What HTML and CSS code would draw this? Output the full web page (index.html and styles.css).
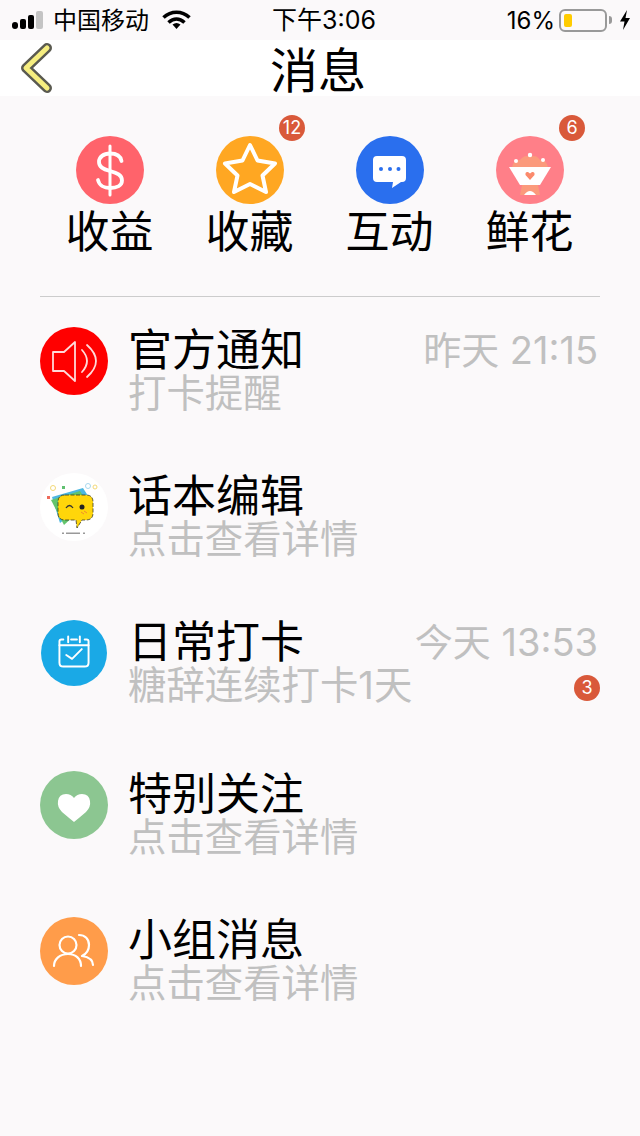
FILE: index.html
```html
<!DOCTYPE html>
<html lang="zh-CN">
<head>
  <meta charset="UTF-8" />
  <title>消息</title>
  <meta name="viewport" content="width=device-width, initial-scale=1.0" />
  <link rel="stylesheet" href="styles.css">
</head>
<body>
  <div class="status-bar">
    <div class="status-left">
      <svg class="signal" width="36" height="20" viewBox="0 0 36 20">
        <rect x="0" y="12" width="6" height="7" rx="3" fill="#000" />
        <rect x="8" y="9" width="6" height="10" rx="2" fill="#000" />
        <rect x="16" y="5" width="6" height="14" rx="2" fill="#000" />
        <rect x="24" y="1" width="7" height="18" rx="2" fill="#c4c4c4" />
      </svg>
      <span class="carrier">中国移动</span>
      <svg class="wifi" width="30" height="20" viewBox="0 0 30 20">
        <path d="M1.500 7.500C9 0.500 20 0.500 27.500 7.500" />
        <path d="M6.500 12.500C11.500 8 17.500 8 22.500 12.500" />
        <path class="wifi-dot" d="M10.500 14.600Q14.500 11.500 18.500 14.600L14.500 19Z" />
      </svg>
    </div>
    <div class="status-time">下午3:06</div>
    <div class="status-right">
      <span>16%</span>
      <span class="battery"><span class="battery-level"></span></span>
      <span class="battery-cap"></span>
      <svg width="12" height="20" viewBox="0 0 12 20"><path d="M8 0L1 11.500H5.500L4 20L11 8H6.500Z" fill="#000" /></svg>
    </div>
  </div>

  <header class="nav">
    <svg class="back" width="40" height="52" viewBox="0 0 40 52">
      <polyline class="back-edge" points="26,6 5,26 26,46" />
      <polyline class="back-fill" points="26,6 5,26 26,46" />
    </svg>
    <h1>消息</h1>
  </header>

  <section class="shortcuts">
    <div class="shortcut">
      <span class="round c-income">
        <svg width="68" height="68" viewBox="0 0 68 68">
          <path class="line" stroke-width="3.800" d="M45.500 25C44.500 20 40 17.500 34 17.500C27.500 17.500 23 21 23 26C23 31 27 33 34 35C41 37 46 39 46 44.500C46 49.500 41 52 34 52C28 52 23 49 22 44" />
          <path class="line" stroke-width="3" d="M34 10V59" />
        </svg>
      </span>
      <span class="shortcut-label">收益</span>
    </div>
    <div class="shortcut">
      <span class="round c-star">
        <svg width="68" height="68" viewBox="0 0 68 68">
          <path class="line" stroke-width="4" d="M34 9L41.500 24.500L59 27.500L46.500 39.500L50 56L34 48L18 56L21.500 39.500L9 27.500L26.500 24.500Z" />
        </svg>
      </span>
      <span class="badge">12</span>
      <span class="shortcut-label">收藏</span>
    </div>
    <div class="shortcut">
      <span class="round c-chat">
        <svg width="68" height="68" viewBox="0 0 68 68">
          <path fill="#fff" d="M21 20H46Q50 20 50 24V42Q50 46 46 46H45L36 52L37 46H21Q17 46 17 42V24Q17 20 21 20Z" />
          <circle cx="25" cy="33" r="2" fill="#2a6fee" />
          <circle cx="34" cy="33" r="2" fill="#2a6fee" />
          <circle cx="42.500" cy="33" r="2" fill="#2a6fee" />
        </svg>
      </span>
      <span class="shortcut-label">互动</span>
    </div>
    <div class="shortcut">
      <span class="round c-flower">
        <svg width="68" height="68" viewBox="0 0 68 68">
          <path fill="#fb9a7c" d="M16 31Q18 23 24 24Q29 18 34 21Q40 18 44 24Q50 23 52 31Z" />
          <circle cx="34" cy="19" r="2.200" fill="#fff" />
          <circle cx="20" cy="25" r="2" fill="#fff" />
          <circle cx="47" cy="24" r="2" fill="#fff" />
          <path fill="#fff" d="M13 31H55L44 49H24Z" />
          <path fill="#fb9a7c" d="M26 49H42L44 59H24Z" />
          <path fill="#fff" d="M28 59Q34 51 40 59Z" />
          <path fill="#fb8a6c" d="M34 44L29.500 39Q29 35.500 32 36L34 37.500L36 36Q39 35.500 38.500 39Z" />
        </svg>
      </span>
      <span class="badge">6</span>
      <span class="shortcut-label">鲜花</span>
    </div>
  </section>

  <div class="divider"></div>

  <ul class="messages">
    <li class="message">
      <span class="round c-notice">
        <svg width="68" height="68" viewBox="0 0 68 68">
          <path class="line soft" stroke-width="1.800" d="M13 25H24L35 15V54L24 44H13Z" />
          <path class="line soft" stroke-width="1.800" d="M42 23Q52 34 42 45" />
          <path class="line soft" stroke-width="1.800" d="M47 18Q65 34 47 50" />
        </svg>
      </span>
      <div class="message-text">
        <div class="message-title">官方通知</div>
        <div class="message-sub">打卡提醒</div>
      </div>
      <div class="message-meta"><span class="time">昨天 21:15</span></div>
    </li>
    <li class="message">
      <span class="round c-mascot">
        <svg width="68" height="68" viewBox="0 0 68 68">
          <path fill="#4cb7e0" d="M12 24L43 15L50 26L20 50Z" />
          <path fill="#62c46c" d="M11 27L40 18L48 30L24 52Z" />
          <path fill="#ffd60a" stroke="#3a3a20" stroke-width="0.800" stroke-dasharray="4 1.500" d="M25 22H46Q53 22 53 29V40Q53 47 46 47H42L37 55L36 47H25Q18 47 18 40V29Q18 22 25 22Z" />
          <path fill="none" stroke="#333" stroke-width="1.300" d="M26 35Q29.500 30 33 35" />
          <circle cx="42" cy="34" r="2.500" fill="#222" />
          <path fill="none" stroke="#f08a30" stroke-width="1" d="M41 39L44 41M44 38L47 40" />
          <rect x="7" y="23" width="3" height="3" fill="#ee6a5a" />
          <rect x="22" y="13" width="3" height="3" fill="#60c070" />
          <circle cx="13" cy="15" r="2.500" fill="none" stroke="#f2d878" />
          <circle cx="48" cy="13" r="2.500" fill="none" stroke="#a8d8ee" />
          <circle cx="55" cy="14" r="2" fill="none" stroke="#f2d878" />
          <rect x="26" y="59.500" width="14" height="1.500" fill="#999" />
          <rect x="22" y="59.500" width="2" height="1.500" fill="#999" />
          <rect x="43" y="59.500" width="2" height="1.500" fill="#999" />
        </svg>
      </span>
      <div class="message-text">
        <div class="message-title">话本编辑</div>
        <div class="message-sub">点击查看详情</div>
      </div>
    </li>
    <li class="message">
      <span class="round c-checkin">
        <svg width="68" height="68" viewBox="0 0 68 68">
          <path class="line" stroke-width="2" d="M23 20H21Q19 20 19 22V44Q19 48 23 48H45Q49 48 49 44V22Q49 20 47 20H45" />
          <path class="line" stroke-width="2" d="M31 20H37M28 17V23M40 17V23M19 26H49" />
          <path class="line" stroke-width="2" d="M26 36L32 40L42 30" />
        </svg>
      </span>
      <div class="message-text">
        <div class="message-title">日常打卡</div>
        <div class="message-sub">糖辞连续打卡1天</div>
      </div>
      <div class="message-meta">
        <span class="time">今天 13:53</span>
        <span class="badge badge-row">3</span>
      </div>
    </li>
    <li class="message message-gap">
      <span class="round c-follow">
        <svg width="68" height="68" viewBox="0 0 68 68">
          <path fill="#fff" d="M34 51Q29 47 22 41Q17 36 18 30Q19 23 26 23Q31 23 34 27Q37 23 42 23Q49 23 50 30Q51 36 46 41Q39 47 34 51Z" />
        </svg>
      </span>
      <div class="message-text">
        <div class="message-title">特别关注</div>
        <div class="message-sub">点击查看详情</div>
      </div>
    </li>
    <li class="message">
      <span class="round c-group">
        <svg width="68" height="68" viewBox="0 0 68 68">
          <circle class="line" stroke-width="2.200" cx="28" cy="28" r="8.500" />
          <path class="line" stroke-width="2.200" d="M14 49C14 42 20 37 28 37C36 37 41 42 41 49" />
          <path class="line" stroke-width="2.200" d="M39 18C45 18 49 22 49 28C49 33 46 37 42 39C48 40 53 43 53 48" />
        </svg>
      </span>
      <div class="message-text">
        <div class="message-title">小组消息</div>
        <div class="message-sub">点击查看详情</div>
      </div>
    </li>
  </ul>
</body>
</html>
```

FILE: styles.css
```css
* {
  box-sizing: border-box;
}

html,
body {
  margin: 0;
  padding: 0;
}

body {
  width: 640px;
  height: 1136px;
  overflow: hidden;
  background: #fbf9fa;
  color: #000;
  font-family: Inter, "Noto Sans CJK SC", sans-serif;
}

/* status bar */
.status-bar {
  height: 40px;
  padding: 0 9px 0 12px;
  display: grid;
  grid-template-columns: 1fr auto 1fr;
  align-items: center;
  font-size: 24px;
}

.status-left,
.status-right {
  display: flex;
  align-items: center;
}

.status-right {
  justify-content: flex-end;
}

.status-time {
  margin-bottom: 4px;
  padding-left: 5px;
  font-size: 25px;
}

.signal {
  margin-right: 5px;
}

.carrier {
  margin: 0 13px 4px 0;
}

.wifi path {
  fill: none;
  stroke: #000;
  stroke-width: 3.6;
}

.wifi .wifi-dot {
  fill: #000;
  stroke: none;
}

.battery {
  width: 48px;
  height: 23px;
  margin-left: 4px;
  padding: 3px;
  border: 2px solid #999;
  border-radius: 6px;
  display: block;
}

.battery-level {
  display: block;
  width: 8px;
  height: 100%;
  background: #fc0;
  border-radius: 2px;
}

.battery-cap {
  width: 3px;
  height: 8px;
  margin: 0 7px 0 2px;
  background: #999;
  border-radius: 0 3px 3px 0;
}

/* nav */
.nav {
  position: relative;
  height: 56px;
  padding-right: 4px;
  background: #fff;
  display: flex;
  align-items: center;
  justify-content: center;
}

.nav h1 {
  margin: 6px 0 0;
  font-size: 48px;
  font-weight: 400;
  line-height: 56px;
}

.back {
  position: absolute;
  left: 21px;
  top: 2px;
}

.back polyline {
  fill: none;
  stroke-linecap: round;
  stroke-linejoin: round;
}

.back-edge {
  stroke: #5a5a50;
  stroke-width: 10;
}

.back-fill {
  stroke: #f6ee80;
  stroke-width: 5;
}

/* round icons */
.round {
  width: 68px;
  height: 68px;
  flex: none;
  border-radius: 50%;
  display: block;
  overflow: hidden;
}

.round svg {
  display: block;
}

.line {
  fill: none;
  stroke: #fff;
  stroke-linecap: round;
  stroke-linejoin: round;
}

.soft {
  opacity: 0.85;
}

.c-income { background: #ff636b; }
.c-star { background: #ffa722; }
.c-chat { background: #2a6fee; }
.c-flower { background: #ff7f88; }
.c-notice { background: #f00; }
.c-mascot { background: #fff; }
.c-follow { background: #8cc691; }
.c-group { background: #ff9c4a; }

.c-checkin {
  width: 66px;
  height: 66px;
  margin: 1px;
  background: #1aa9e6;
}

.c-checkin svg {
  width: 66px;
  height: 66px;
}

/* top shortcuts */
.shortcuts {
  margin: 40px 40px 0;
  display: grid;
  grid-template-columns: repeat(4, 1fr);
}

.shortcut {
  position: relative;
  display: flex;
  flex-direction: column;
  align-items: center;
}

.shortcut-label {
  margin-top: 4px;
  padding-right: 1px;
  font-size: 44px;
  line-height: 48px;
}

.badge {
  width: 26px;
  height: 26px;
  border-radius: 50%;
  background: #d9593a;
  color: #fff;
  font-size: 18px;
  line-height: 26px;
  text-align: center;
}

.shortcut .badge {
  position: absolute;
  top: -21px;
  left: 99px;
}

.divider {
  height: 1px;
  margin: 40px 40px 0;
  background: #ccc;
}

/* message list */
.messages {
  list-style: none;
  margin: 0;
  padding: 0 40px;
}

.message {
  height: 146px;
  padding-top: 30px;
  display: flex;
  align-items: flex-start;
}

.message-gap {
  margin-top: 6px;
}

.message-text {
  margin-left: 20px;
  padding-top: 1px;
  flex: 1;
}

.message-title {
  font-size: 44px;
  line-height: 44px;
}

.message-sub {
  font-size: 38.4px;
  line-height: 43px;
  color: #c0c0c0;
}

.message-meta {
  padding-right: 2px;
  display: flex;
  flex-direction: column;
  align-items: flex-end;
}

.time {
  font-size: 38px;
  line-height: 46px;
  color: #c0c0c0;
}

.badge-row {
  margin: 10px -2px 0 0;
}
```
